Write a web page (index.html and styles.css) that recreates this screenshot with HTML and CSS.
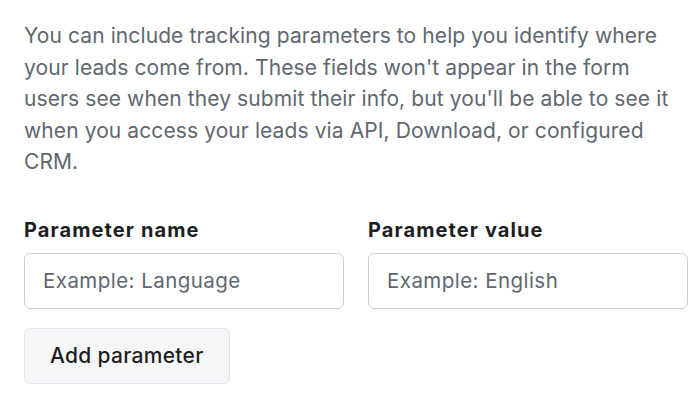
FILE: index.html
```html
<!DOCTYPE html>
<html lang="en">
<head>
<meta charset="utf-8">
<link rel="stylesheet" href="styles.css">
</head>
<body>
<div class="panel">
  <p class="intro">You can include tracking parameters to help you identify where your leads come from. These fields won't appear in the form users see when they submit their info, but you'll be able to see it when you access your leads via API, Download, or configured CRM.</p>
  <div class="fields">
    <label class="field">
      <span class="label">Parameter name</span>
      <input class="input" type="text" placeholder="Example: Language">
    </label>
    <label class="field">
      <span class="label">Parameter value</span>
      <input class="input" type="text" placeholder="Example: English">
    </label>
  </div>
  <button class="btn" type="button">Add parameter</button>
</div>
</body>
</html>
```
FILE: styles.css
```css
* { box-sizing: border-box; }
html, body { margin: 0; background: #ffffff; }
body { font-family: Inter, "Noto Sans", sans-serif; }
.panel {
  padding: 20px 12px 0 24px;
  display: flex;
  flex-direction: column;
  align-items: flex-start;
}
.intro {
  margin: 0;
  font-size: 21px;
  letter-spacing: 0.1px;
  line-height: 31.5px;
  color: #606770;
  width: 655px;
}
.fields {
  display: grid;
  grid-template-columns: 320px 320px;
  column-gap: 24px;
  margin-top: 40px;
}
.field {
  display: flex;
  flex-direction: column;
  gap: 11px;
}
.label {
  font-size: 20px;
  font-weight: 700;
  letter-spacing: 1.1px;
  color: #1c1e21;
  line-height: 24px;
}
.input {
  height: 56px;
  width: 320px;
  border: 1px solid #ccd0d5;
  border-radius: 6px;
  padding: 0 18px;
  font-family: inherit;
  font-size: 20.5px;
  letter-spacing: 0.45px;
  color: #1c1e21;
  background: #fff;
  outline: none;
}
.input::placeholder { color: #606770; opacity: 1; }
.btn {
  margin-top: 19px;
  height: 56px;
  padding: 0 25px;
  border: 1px solid #e4e6eb;
  border-radius: 6px;
  background: #f5f6f7;
  font-family: inherit;
  font-size: 21px;
  letter-spacing: 0.3px;
  font-weight: 500;
  color: #1c1e21;
}
```
